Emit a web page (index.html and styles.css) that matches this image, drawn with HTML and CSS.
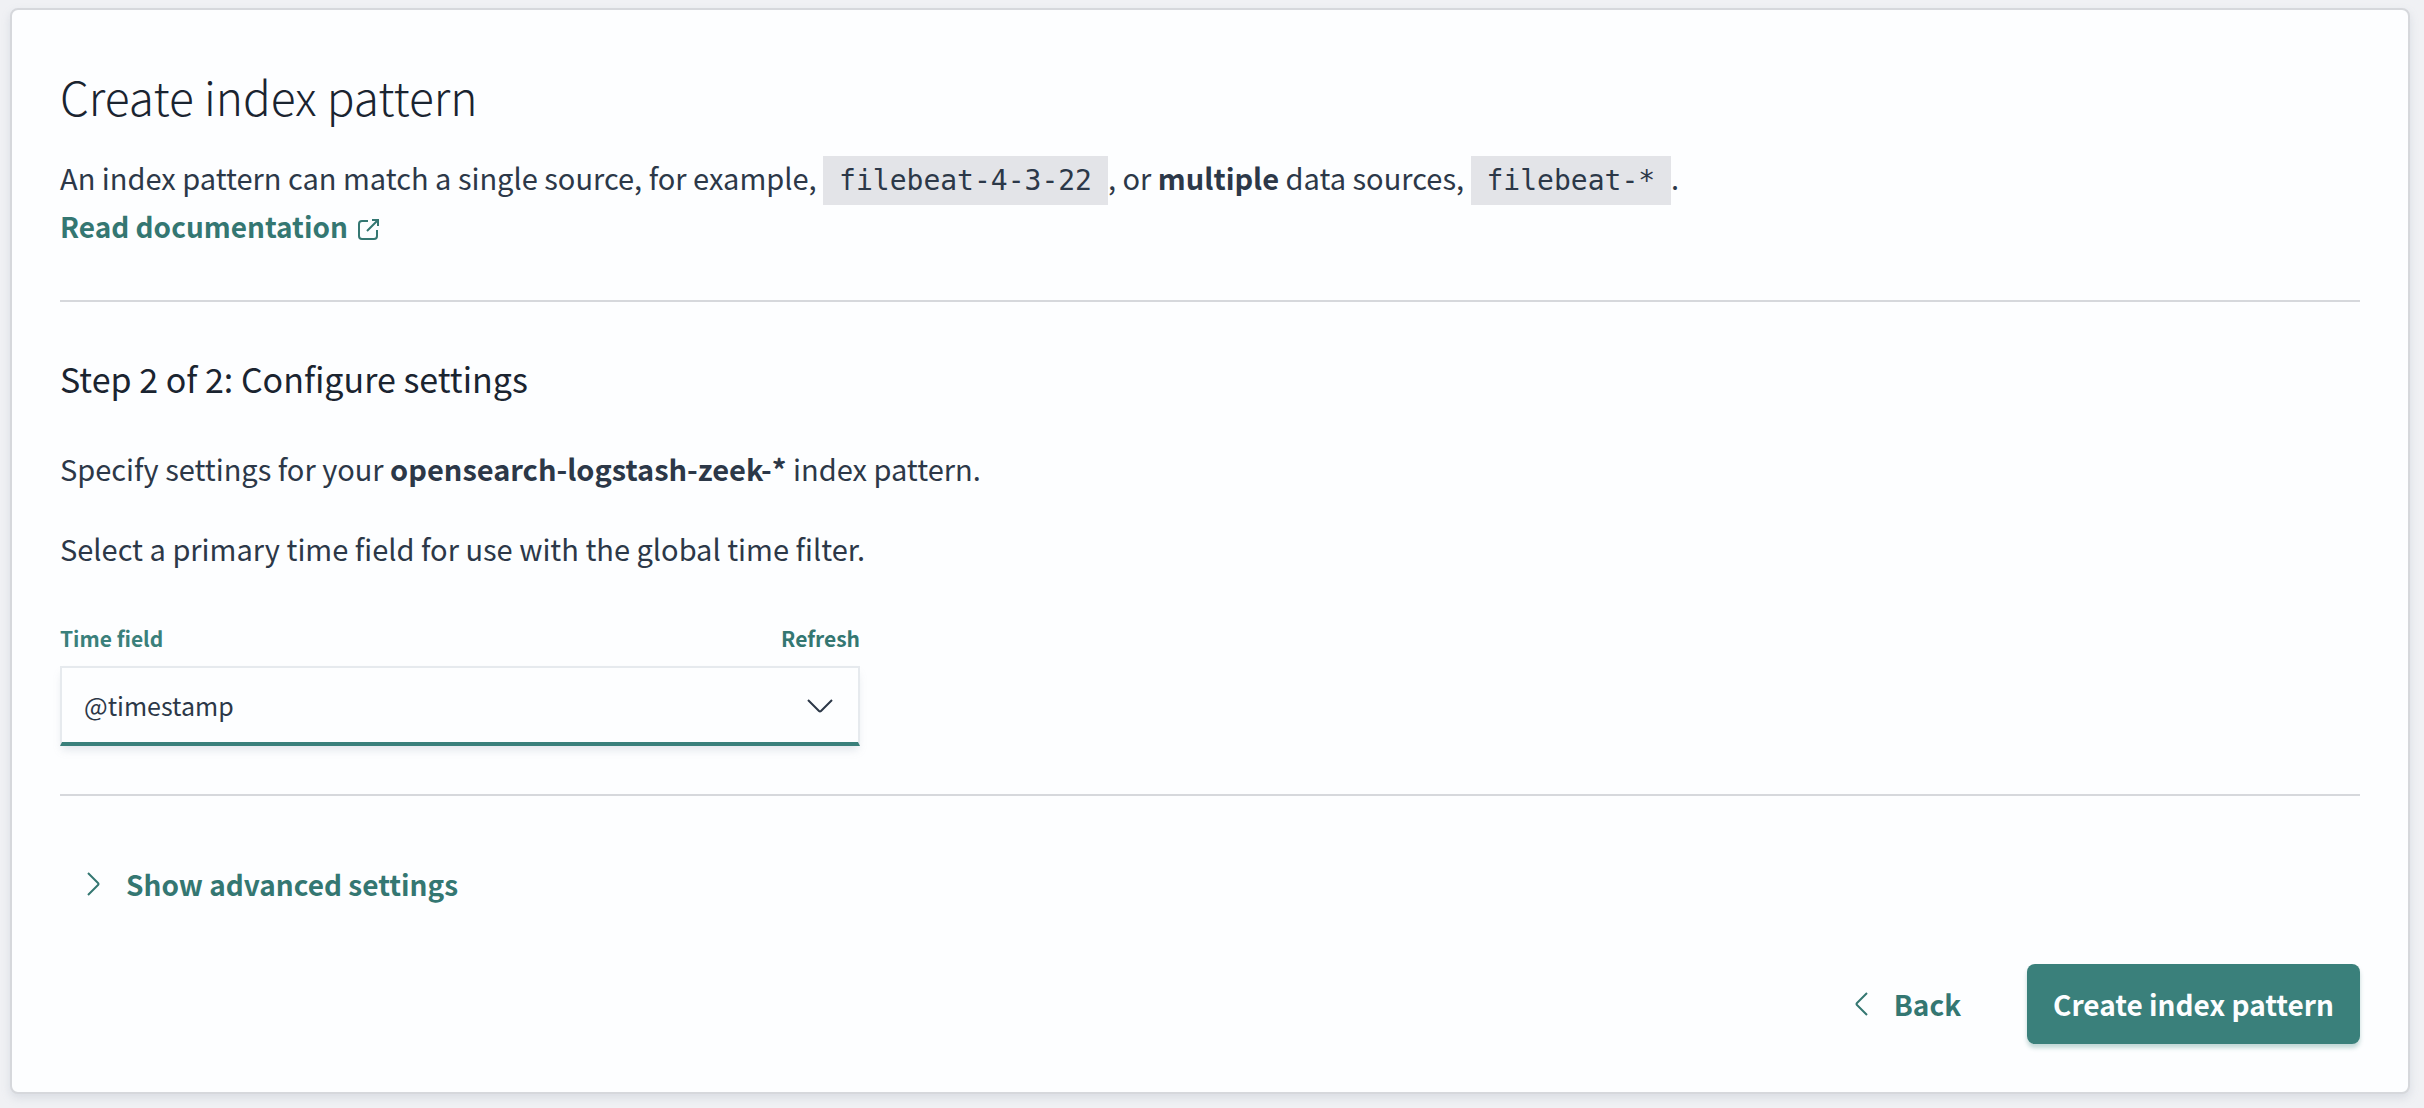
FILE: index.html
```html
<!DOCTYPE html>
<html lang="en">
<head>
<meta charset="utf-8">
<title>Create index pattern</title>
<link rel="stylesheet" href="styles.css">
</head>
<body>
<main class="panel">
  <header class="intro">
    <h1 class="title">Create index pattern</h1>
    <p class="text">An index pattern can match a single source, for example, <code class="code">filebeat-4-3-22</code>, or <strong>multiple</strong> data sources, <code class="code">filebeat-*</code>.<br>
      <a class="link" href="#docs">Read documentation<svg class="popout" viewBox="0 0 24 24" aria-hidden="true"><path d="M11 4H5a3 3 0 0 0-3 3v12a3 3 0 0 0 3 3h12a3 3 0 0 0 3-3v-6M15 3h6v6M21 3 10 14"/></svg></a></p>
  </header>
  <hr class="rule">
  <section class="step">
    <h2 class="subtitle">Step 2 of 2: Configure settings</h2>
    <p class="text">Specify settings for your <strong>opensearch-logstash-zeek-*</strong> index pattern.</p>
    <p class="text">Select a primary time field for use with the global time filter.</p>
    <form class="field">
      <div class="labels">
        <label for="time-field">Time field</label>
        <button class="refresh" type="button">Refresh</button>
      </div>
      <div class="control">
        <select class="select" id="time-field"><option>@timestamp</option></select>
        <svg class="icon arrow" viewBox="0 0 32 32" aria-hidden="true"><path d="m4 10 11 11q1 1 2 0l11-11"/></svg>
      </div>
    </form>
  </section>
  <hr class="rule">
  <button class="flat advanced" type="button"><svg class="icon" viewBox="0 0 32 32" aria-hidden="true"><path d="m12 5 10 10q1 1 0 2L12 27"/></svg>Show advanced settings</button>
  <footer class="actions">
    <button class="flat" type="button"><svg class="icon" viewBox="0 0 32 32" aria-hidden="true"><path d="M23 5 13 15q-1 1 0 2l10 10"/></svg>Back</button>
    <button class="primary" type="button">Create index pattern</button>
  </footer>
</main>
</body>
</html>
```
FILE: styles.css
```css
* { box-sizing: border-box; }

body {
  margin: 0;
  padding: 8px 14px 16px 10px;
  background: #f0f1f4;
  color: #2c3848;
  font-family: "Noto Sans CJK JP", "Noto Sans", sans-serif;
  font-size: 29px;
  line-height: 48px;
}

h1, h2, p { margin: 0; }

button, select { font: inherit; color: inherit; }

button {
  padding: 0;
  border: 0;
  background: none;
  cursor: pointer;
}

.panel {
  padding: 48px;
  border: 2px solid #d6d8dc;
  border-radius: 8px;
  background: #fdfeff;
  box-shadow: 0 4px 8px rgba(152, 162, 179, 0.25);
}

.intro { padding-bottom: 2px; }

.title {
  margin-bottom: 19px;
  color: #1a2430;
  font-size: 46px;
  font-weight: 300;
  line-height: 76px;
}

.code {
  padding: 8px 16px;
  background: #e3e4e8;
  font-family: "DejaVu Sans Mono", "Liberation Mono", monospace;
  font-size: 28px;
  line-height: 1;
}

.link {
  color: #347772;
  font-size: 28px;
  font-weight: 700;
  text-decoration: none;
}

.popout {
  width: 24px;
  height: 24px;
  margin-left: 9px;
  vertical-align: -3px;
  fill: none;
  stroke: currentColor;
  stroke-width: 2;
}

.rule {
  height: 2px;
  margin: 48px 0;
  border: 0;
  background: #d6d8dc;
}

.step {
  display: flex;
  flex-direction: column;
  gap: 32px;
  padding-top: 5px;
}

.subtitle {
  margin-bottom: 9px;
  color: #1a2430;
  font-size: 34px;
  font-weight: 400;
}

.field {
  width: 800px;
  max-width: 100%;
  padding-top: 18px;
}

.labels {
  display: flex;
  justify-content: space-between;
  margin-bottom: 12px;
  color: #3a807b;
  font-size: 21px;
  font-weight: 700;
  line-height: 32px;
}

.refresh { color: #347772; }

.control { display: grid; }

.select {
  grid-area: 1 / 1;
  height: 80px;
  padding: 0 72px 0 22px;
  border: 2px solid #e6eaee;
  border-bottom: 4px solid #3a807b;
  border-radius: 0;
  background: #fdfeff;
  box-shadow: 0 6px 8px -2px rgba(152, 162, 179, 0.25);
  font-size: 25px;
  appearance: none;
}

.icon {
  width: 32px;
  height: 32px;
  fill: none;
  stroke: currentColor;
  stroke-width: 2;
}

.arrow {
  grid-area: 1 / 1;
  place-self: center end;
  margin-right: 24px;
  pointer-events: none;
}

.flat {
  display: flex;
  align-items: center;
  gap: 18px;
  color: #347772;
  font-size: 28px;
  font-weight: 700;
}

.advanced { padding: 16px; }

.actions {
  display: flex;
  justify-content: flex-end;
  align-items: center;
  gap: 66px;
  padding-top: 40px;
}

.primary {
  height: 80px;
  padding: 0 26px;
  border-radius: 8px;
  background: #3a807b;
  box-shadow: 0 4px 4px rgba(58, 128, 123, 0.3);
  color: #fdfeff;
  font-size: 28px;
  font-weight: 700;
}
```
